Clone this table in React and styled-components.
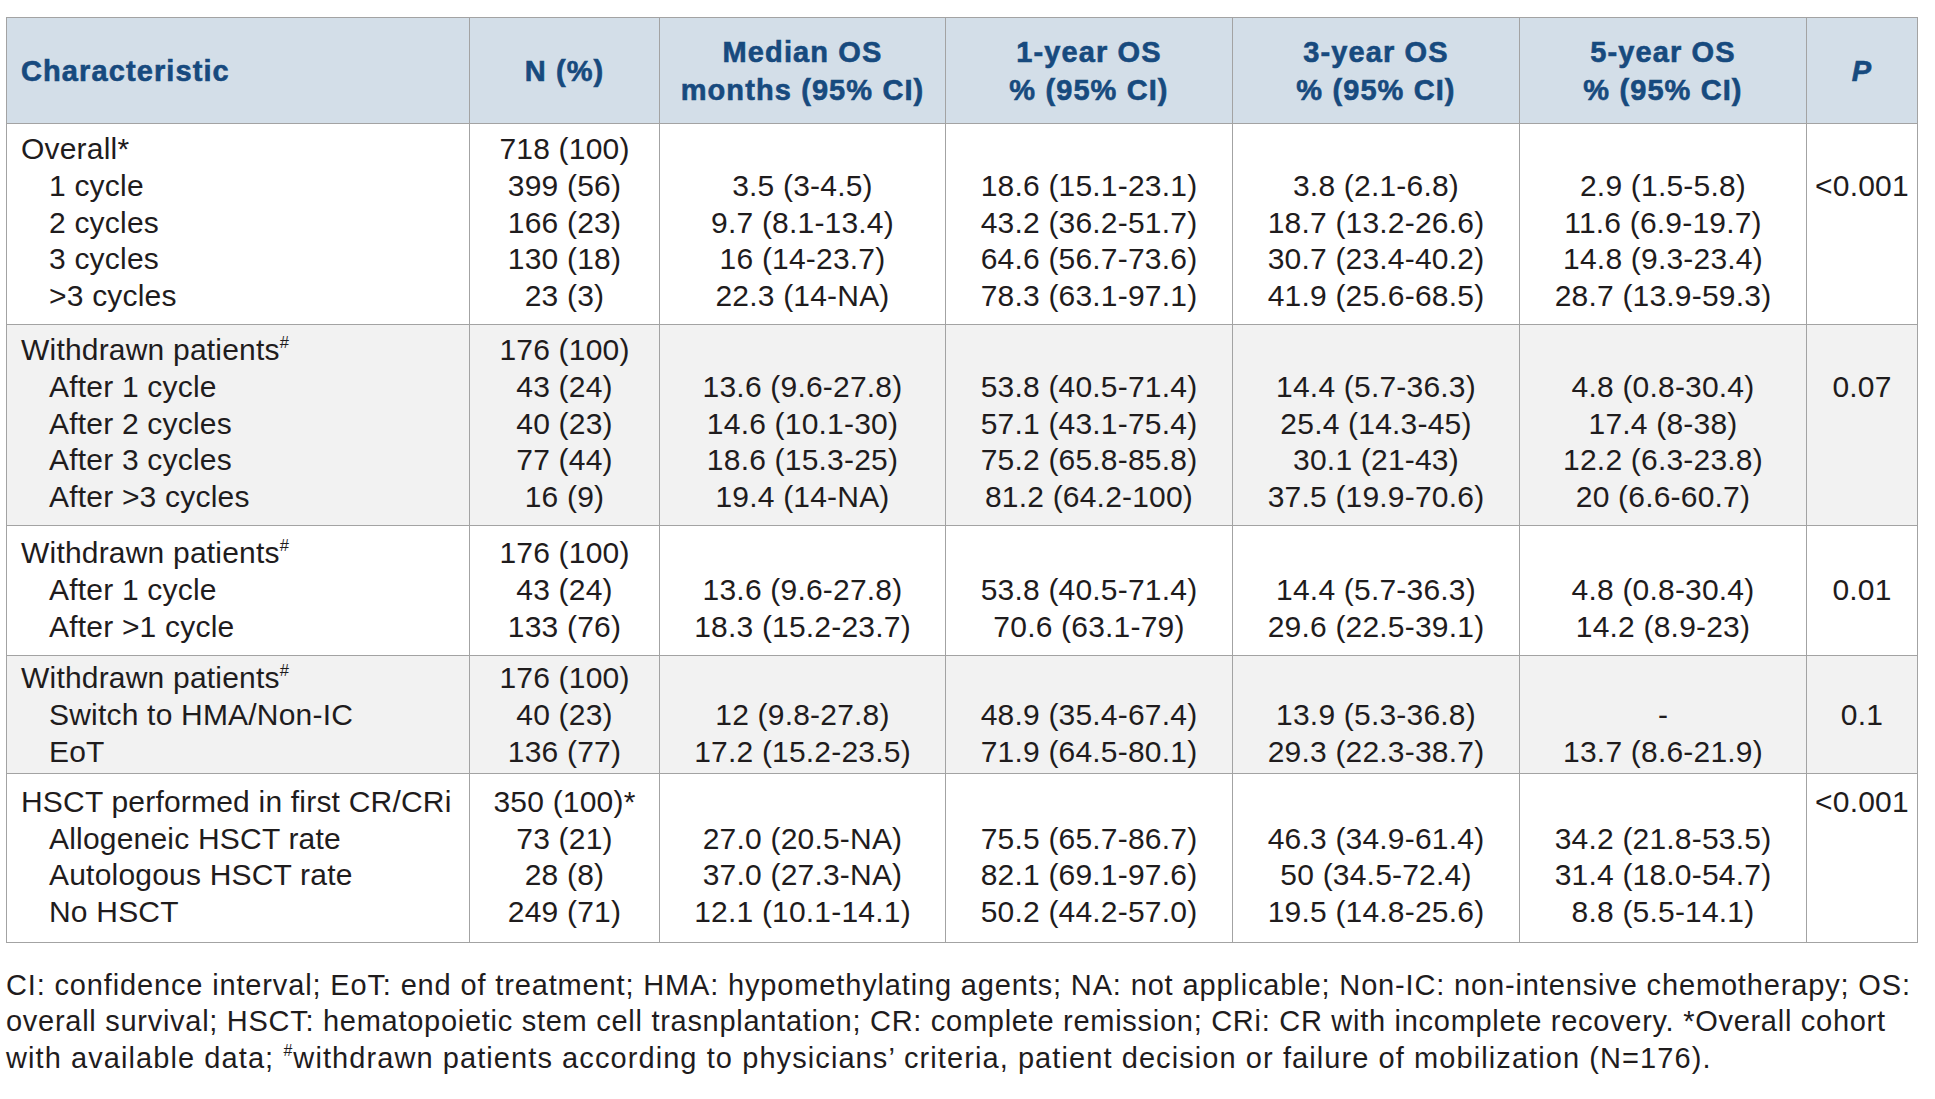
import React from "react";
import styled, { createGlobalStyle } from "styled-components";

const GlobalStyle = createGlobalStyle`
  body {
    margin: 0;
    background: #ffffff;
    font-family: "Liberation Sans", Arial, sans-serif;
    color: #1f1c1d;
  }
`;

const Page = styled.div`
  padding: 17px 19px 0 6px;
`;

const Table = styled.table`
  width: 1911px;
  table-layout: fixed;
  border-collapse: collapse;
  border: 1px solid #a3a3a3;
  font-size: 30px;
  line-height: 36.8px;
  letter-spacing: 0.2px;
`;

const HeadCell = styled.th`
  width: ${(p) => p.$w}px;
  height: 106px;
  padding: 0 ${(p) => (p.$left ? "14px" : "4px")};
  box-sizing: border-box;
  background: #d3dee8;
  color: #174a7e;
  font-weight: 700;
  font-size: 29px;
  line-height: 38px;
  letter-spacing: 1.1px;
  -webkit-text-stroke: 0.6px #174a7e;
  text-align: ${(p) => (p.$left ? "left" : "center")};
  font-style: ${(p) => (p.$italic ? "italic" : "normal")};
  border: 1px solid #a3a3a3;
  white-space: nowrap;
`;

const Group = styled.tbody`
  background: ${(p) => (p.$shade ? "#f2f2f2" : "#ffffff")};
`;

const Cell = styled.td`
  border-left: 1px solid #a3a3a3;
  border-right: 1px solid #a3a3a3;
  border-top: ${(p) => (p.$first ? "1px solid #a3a3a3" : "none")};
  padding-top: ${(p) => p.$pt}px;
  padding-bottom: ${(p) => p.$pb}px;
  padding-left: ${(p) => (p.$left ? "14px" : "4px")};
  padding-right: ${(p) => (p.$left ? "6px" : "4px")};
  text-align: ${(p) => (p.$left ? "left" : "center")};
  white-space: nowrap;
  vertical-align: top;
`;

const Label = styled.span`
  display: inline-block;
  padding-left: ${(p) => (p.$sub ? "28px" : "0")};
`;

const Sup = styled.sup`
  font-size: 0.55em;
  line-height: 0;
  vertical-align: 0.75em;
`;

const Note = styled.p`
  margin: 24px 0 0;
  font-size: 29px;
  line-height: 36.5px;
  white-space: nowrap;
`;

const NoteLine = styled.span`
  display: block;
  letter-spacing: ${(p) => p.$ls ?? 0.75}px;
`;

const columns = [
  { w: 463, label: "Characteristic", left: true },
  { w: 190, label: "N (%)" },
  { w: 286, label: ["Median OS", "months (95% CI)"] },
  { w: 287, label: ["1-year OS", "% (95% CI)"] },
  { w: 287, label: ["3-year OS", "% (95% CI)"] },
  { w: 287, label: ["5-year OS", "% (95% CI)"] },
  { w: 111, label: "P", italic: true },
];

const withdrawn = (
  <>
    Withdrawn patients<Sup>#</Sup>
  </>
);

const groups = [
  {
    shade: false,
    pt: 7,
    pb: 9,
    pRow: 1,
    p: "<0.001",
    rows: [
      ["Overall*", false, "718 (100)", "", "", "", ""],
      ["1 cycle", true, "399 (56)", "3.5 (3-4.5)", "18.6 (15.1-23.1)", "3.8 (2.1-6.8)", "2.9 (1.5-5.8)"],
      ["2 cycles", true, "166 (23)", "9.7 (8.1-13.4)", "43.2 (36.2-51.7)", "18.7 (13.2-26.6)", "11.6 (6.9-19.7)"],
      ["3 cycles", true, "130 (18)", "16 (14-23.7)", "64.6 (56.7-73.6)", "30.7 (23.4-40.2)", "14.8 (9.3-23.4)"],
      [">3 cycles", true, "23 (3)", "22.3 (14-NA)", "78.3 (63.1-97.1)", "41.9 (25.6-68.5)", "28.7 (13.9-59.3)"],
    ],
  },
  {
    shade: true,
    pt: 7,
    pb: 9,
    pRow: 1,
    p: "0.07",
    rows: [
      [withdrawn, false, "176 (100)", "", "", "", ""],
      ["After 1 cycle", true, "43 (24)", "13.6 (9.6-27.8)", "53.8 (40.5-71.4)", "14.4 (5.7-36.3)", "4.8 (0.8-30.4)"],
      ["After 2 cycles", true, "40 (23)", "14.6 (10.1-30)", "57.1 (43.1-75.4)", "25.4 (14.3-45)", "17.4 (8-38)"],
      ["After 3 cycles", true, "77 (44)", "18.6 (15.3-25)", "75.2 (65.8-85.8)", "30.1 (21-43)", "12.2 (6.3-23.8)"],
      ["After >3 cycles", true, "16 (9)", "19.4 (14-NA)", "81.2 (64.2-100)", "37.5 (19.9-70.6)", "20 (6.6-60.7)"],
    ],
  },
  {
    shade: false,
    pt: 9,
    pb: 10,
    pRow: 1,
    p: "0.01",
    rows: [
      [withdrawn, false, "176 (100)", "", "", "", ""],
      ["After 1 cycle", true, "43 (24)", "13.6 (9.6-27.8)", "53.8 (40.5-71.4)", "14.4 (5.7-36.3)", "4.8 (0.8-30.4)"],
      ["After >1 cycle", true, "133 (76)", "18.3 (15.2-23.7)", "70.6 (63.1-79)", "29.6 (22.5-39.1)", "14.2 (8.9-23)"],
    ],
  },
  {
    shade: true,
    pt: 4,
    pb: 2,
    pRow: 1,
    p: "0.1",
    rows: [
      [withdrawn, false, "176 (100)", "", "", "", ""],
      ["Switch to HMA/Non-IC", true, "40 (23)", "12 (9.8-27.8)", "48.9 (35.4-67.4)", "13.9 (5.3-36.8)", "-"],
      ["EoT", true, "136 (77)", "17.2 (15.2-23.5)", "71.9 (64.5-80.1)", "29.3 (22.3-38.7)", "13.7 (8.6-21.9)"],
    ],
  },
  {
    shade: false,
    pt: 10,
    pb: 11,
    pRow: 0,
    p: "<0.001",
    rows: [
      ["HSCT performed in first CR/CRi", false, "350 (100)*", "", "", "", ""],
      ["Allogeneic HSCT rate", true, "73 (21)", "27.0 (20.5-NA)", "75.5 (65.7-86.7)", "46.3 (34.9-61.4)", "34.2 (21.8-53.5)"],
      ["Autologous HSCT rate", true, "28 (8)", "37.0 (27.3-NA)", "82.1 (69.1-97.6)", "50 (34.5-72.4)", "31.4 (18.0-54.7)"],
      ["No HSCT", true, "249 (71)", "12.1 (10.1-14.1)", "50.2 (44.2-57.0)", "19.5 (14.8-25.6)", "8.8 (5.5-14.1)"],
    ],
  },
];

function GroupRows({ group }) {
  const last = group.rows.length - 1;
  const pad = (i) => ({
    $first: i === 0,
    $pt: i === 0 ? group.pt : 0,
    $pb: i === last ? group.pb : 0,
  });
  return (
    <Group $shade={group.shade}>
      {group.rows.map(([label, sub, ...values], i) => (
        <tr key={i}>
          <Cell $left {...pad(i)}>
            <Label $sub={sub}>{label}</Label>
          </Cell>
          {values.map((v, j) => (
            <Cell key={j} {...pad(i)}>
              {v}
            </Cell>
          ))}
          <Cell {...pad(i)}>{i === group.pRow ? group.p : ""}</Cell>
        </tr>
      ))}
    </Group>
  );
}

export default function App() {
  return (
    <Page>
      <GlobalStyle />
      <Table>
        <thead>
          <tr>
            {columns.map((c, i) => (
              <HeadCell key={i} $w={c.w} $left={c.left} $italic={c.italic}>
                {Array.isArray(c.label) ? (
                  <>
                    {c.label[0]}
                    <br />
                    {c.label[1]}
                  </>
                ) : (
                  c.label
                )}
              </HeadCell>
            ))}
          </tr>
        </thead>
        {groups.map((g, i) => (
          <GroupRows key={i} group={g} />
        ))}
      </Table>
      <Note>
        <NoteLine $ls={0.85}>
          CI: confidence interval; EoT: end of treatment; HMA: hypomethylating agents; NA: not applicable; Non-IC: non-intensive chemotherapy; OS:
        </NoteLine>
        <NoteLine $ls={0.72}>
          overall survival; HSCT: hematopoietic stem cell trasnplantation; CR: complete remission; CRi: CR with incomplete recovery. *Overall cohort
        </NoteLine>
        <NoteLine $ls={1.08}>
          with available data; <Sup>#</Sup>withdrawn patients according to physicians’ criteria, patient decision or failure of mobilization (N=176).
        </NoteLine>
      </Note>
    </Page>
  );
}
